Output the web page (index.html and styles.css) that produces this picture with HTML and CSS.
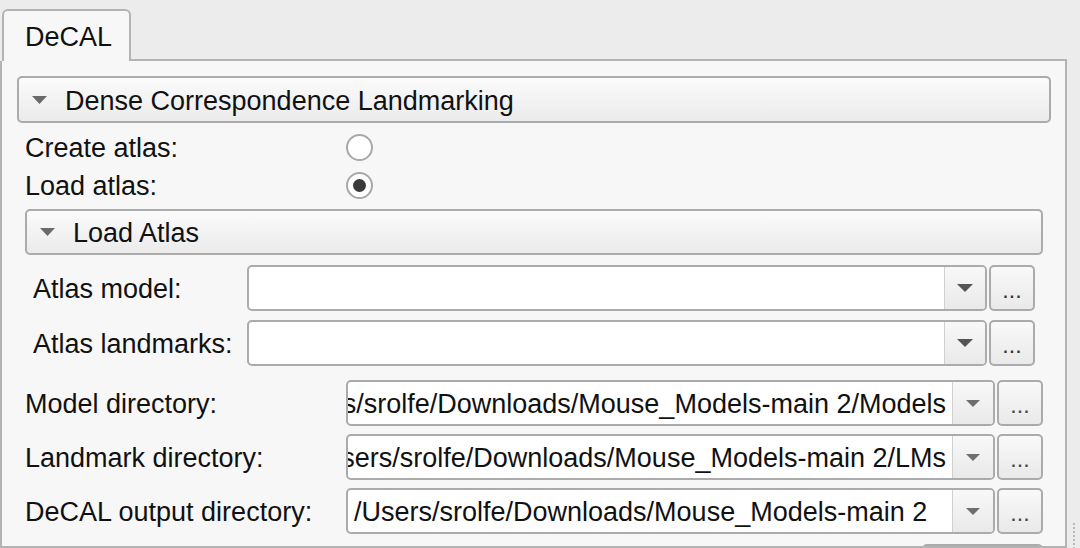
FILE: index.html
```html
<!DOCTYPE html>
<html>
<head>
<meta charset="utf-8">
<link rel="stylesheet" href="styles.css">
</head>
<body>
<div class="tabbar">
  <div class="tab-lead"></div>
  <div class="tab"><span class="txt">DeCAL</span></div>
  <div class="tab-fill"></div>
</div>
<div class="main">
  <div class="panel">
    <div class="collapsible">
      <svg class="tri" width="15" height="8" viewBox="0 0 15 8"><polygon points="0,0 15,0 7.5,8"/></svg>
      <span class="txt">Dense Correspondence Landmarking</span>
    </div>
    <div class="section">
      <div class="radios">
        <span class="label">Create atlas:</span><span class="radio"></span>
        <span class="label">Load atlas:</span><span class="radio checked"></span>
      </div>
      <div class="collapsible sub">
        <svg class="tri" width="15" height="8" viewBox="0 0 15 8"><polygon points="0,0 15,0 7.5,8"/></svg>
        <span class="txt">Load Atlas</span>
      </div>
      <div class="subsection">
        <span class="label">Atlas model:</span>
        <div class="combo"><div class="field"></div><div class="drop"><svg width="16" height="8" viewBox="0 0 16 8"><polygon points="0,0 16,0 8,8"/></svg></div></div>
        <div class="btn">...</div>
        <span class="label">Atlas landmarks:</span>
        <div class="combo"><div class="field"></div><div class="drop"><svg width="16" height="8" viewBox="0 0 16 8"><polygon points="0,0 16,0 8,8"/></svg></div></div>
        <div class="btn">...</div>
      </div>
      <div class="dirs">
        <span class="label">Model directory:</span>
        <div class="combo"><div class="field scrolled"><span>/Users/srolfe/Downloads/Mouse_Models-main 2/Models</span></div><div class="drop light"><svg width="14" height="7" viewBox="0 0 14 7"><polygon points="0,0 14,0 7,7"/></svg></div></div>
        <div class="btn light">...</div>
        <span class="label">Landmark directory:</span>
        <div class="combo"><div class="field scrolled"><span>/Users/srolfe/Downloads/Mouse_Models-main 2/LMs</span></div><div class="drop light"><svg width="14" height="7" viewBox="0 0 14 7"><polygon points="0,0 14,0 7,7"/></svg></div></div>
        <div class="btn light">...</div>
        <span class="label">DeCAL output directory:</span>
        <div class="combo"><div class="field"><span>/Users/srolfe/Downloads/Mouse_Models-main 2</span></div><div class="drop light"><svg width="14" height="7" viewBox="0 0 14 7"><polygon points="0,0 14,0 7,7"/></svg></div></div>
        <div class="btn light">...</div>
      </div>
      <div class="lastrow">
        <div class="spin"><div class="spin-main"></div><div class="spin-side"></div></div>
      </div>
    </div>
  </div>
  <div class="handle"><i></i></div>
</div>
</body>
</html>
```

FILE: styles.css
```css
html, body {
  margin: 0;
  padding: 0;
}
body {
  background: #ececec;
  font-family: "Liberation Sans", Arial, sans-serif;
  font-size: 27px;
  color: #111;
  width: 1080px;
  height: 548px;
  overflow: hidden;
}
.txt {
  padding-top: 3px;
}
.tabbar {
  display: flex;
  padding-top: 9px;
  width: 1067px;
}
.tab-lead {
  width: 2px;
}
.tab {
  width: 129px;
  height: 52px;
  box-sizing: border-box;
  border: 2px solid #b3b3b3;
  border-bottom: none;
  border-radius: 6px 6px 0 0;
  background: #f7f7f7;
  padding-left: 21px;
  display: flex;
  align-items: center;
}
.tab-fill {
  flex: 1;
  border-bottom: 2px solid #b3b3b3;
}
.main {
  display: flex;
}
.panel {
  width: 1067px;
  flex-shrink: 0;
  box-sizing: border-box;
  height: 487px;
  border: 2px solid #b3b3b3;
  border-top: none;
  background: #f7f7f7;
  padding: 15px 14px 0 15px;
  overflow: hidden;
}
.handle {
  flex: 1;
  display: flex;
  justify-content: center;
  padding-top: 462px;
}
.handle i {
  display: block;
  width: 2px;
  height: 30px;
  background: repeating-linear-gradient(to bottom, #b8b8b8 0 2px, transparent 2px 4px);
}
.collapsible {
  height: 47px;
  box-sizing: border-box;
  border: 2px solid #ababab;
  border-radius: 5px;
  background: linear-gradient(#fbfbfb, #ebebeb);
  display: flex;
  align-items: center;
  padding-left: 13px;
  gap: 18px;
}
.collapsible.sub {
  height: 46px;
  margin-top: 5px;
}
.tri {
  fill: #6a6a6a;
  flex-shrink: 0;
}
.section {
  padding: 0 8px;
}
.radios {
  display: grid;
  grid-template-columns: 321px auto;
  grid-auto-rows: 38px;
  align-items: center;
  justify-items: start;
  margin-top: 5px;
}
.radio {
  width: 27px;
  height: 27px;
  box-sizing: border-box;
  border: 2px solid #a8a8a8;
  border-radius: 50%;
  background: #fff;
  display: flex;
  align-items: center;
  justify-content: center;
}
.radio.checked::after {
  content: "";
  width: 13px;
  height: 13px;
  border-radius: 50%;
  background: #393939;
}
.subsection {
  padding: 0 8px;
  margin-top: 10px;
  display: grid;
  grid-template-columns: 212px 1fr 46px;
  column-gap: 2px;
  row-gap: 9px;
  grid-auto-rows: 46px;
}
.dirs {
  margin-top: 14px;
  display: grid;
  grid-template-columns: 319px 1fr 46px;
  column-gap: 2px;
  row-gap: 8px;
  grid-auto-rows: 46px;
}
.label {
  align-self: center;
  white-space: nowrap;
  padding-top: 3px;
}
.combo {
  display: flex;
  min-width: 0;
  box-sizing: border-box;
  border: 2px solid #ababab;
  border-radius: 5px;
  overflow: hidden;
  background: #fff;
}
.field {
  flex: 1;
  min-width: 0;
  display: flex;
  align-items: center;
  overflow: hidden;
  padding: 3px 6px 0 6px;
  white-space: nowrap;
  color: #111;
}
.field.scrolled {
  justify-content: flex-end;
}
.field span {
  flex-shrink: 0;
}
.drop {
  width: 40px;
  flex-shrink: 0;
  border-left: 1px solid #d0d0d0;
  background: linear-gradient(#f8f8f8, #e9e9e9);
  display: flex;
  align-items: center;
  justify-content: center;
  fill: #555;
}
.drop.light {
  fill: #6e6e6e;
}
.btn {
  box-sizing: border-box;
  border: 2px solid #ababab;
  border-radius: 5px;
  background: linear-gradient(#f9f9f9, #e9e9e9);
  font-size: 16px;
  font-weight: bold;
  letter-spacing: 2px;
  padding-left: 2px;
  padding-top: 9px;
  display: flex;
  justify-content: center;
  align-items: center;
  color: #333;
}
.btn.light {
  color: #484848;
}
.lastrow {
  margin-top: 10px;
  display: flex;
  justify-content: flex-end;
}
.spin {
  width: 121px;
  height: 40px;
  box-sizing: border-box;
  border: 2px solid #ababab;
  border-radius: 5px;
  display: flex;
  background: #fff;
}
.spin-main {
  flex: 1;
}
.spin-side {
  width: 28px;
  border-left: 2px solid #c4c4c4;
  background: linear-gradient(#f8f8f8, #ececec);
}
```
